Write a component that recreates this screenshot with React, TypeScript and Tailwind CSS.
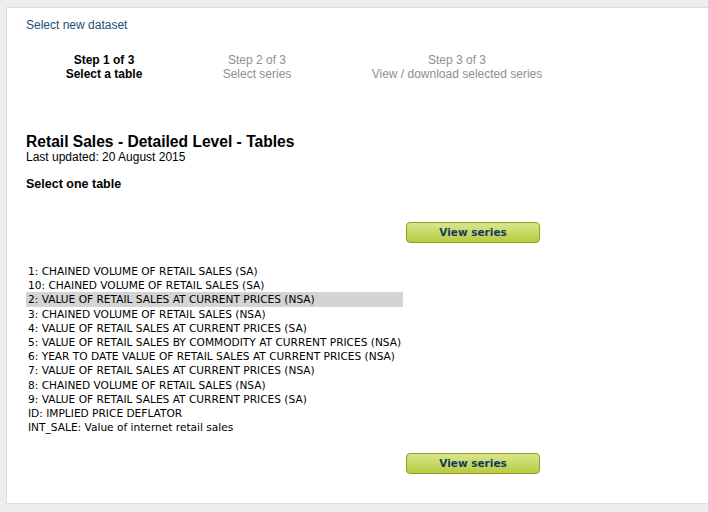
import React from "react";

const tables = [
  "1: CHAINED VOLUME OF RETAIL SALES (SA)",
  "10: CHAINED VOLUME OF RETAIL SALES (SA)",
  "2: VALUE OF RETAIL SALES AT CURRENT PRICES (NSA)",
  "3: CHAINED VOLUME OF RETAIL SALES (NSA)",
  "4: VALUE OF RETAIL SALES AT CURRENT PRICES (SA)",
  "5: VALUE OF RETAIL SALES BY COMMODITY AT CURRENT PRICES (NSA)",
  "6: YEAR TO DATE VALUE OF RETAIL SALES AT CURRENT PRICES (NSA)",
  "7: VALUE OF RETAIL SALES AT CURRENT PRICES (NSA)",
  "8: CHAINED VOLUME OF RETAIL SALES (NSA)",
  "9: VALUE OF RETAIL SALES AT CURRENT PRICES (SA)",
  "ID: IMPLIED PRICE DEFLATOR",
  "INT_SALE: Value of internet retail sales",
];

function ViewButton() {
  return (
    <div className="flex pl-[380px]">
      <button className="w-[134px] h-[21px] rounded-[4px] border border-[#8fa01e] bg-gradient-to-b from-[#d9e68a] to-[#b7cb3c] text-[#123a5e] text-[10.5px] font-bold font-['DejaVu_Sans',sans-serif]">
        View series
      </button>
    </div>
  );
}

function Step({ num, label, active, w }: { num: string; label: string; active?: boolean; w: string }) {
  return (
    <div className={`${w} flex flex-col items-center text-[12px] leading-[14px] ${active ? "font-bold text-black" : "text-[#8f8f8f]"}`}>
      <span>{num}</span>
      <span>{label}</span>
    </div>
  );
}

export default function App() {
  return (
    <div className="w-[708px] h-[512px] bg-[#eeeeee] pt-[7px] pl-[6px] overflow-hidden font-['Liberation_Sans',Arial,sans-serif]">
      <div className="w-[720px] h-[497px] bg-white border border-[#dcdcdc] pl-[19px] pt-[10px]">
        <div className="text-[12px] leading-[14px] text-[#1b4f78]">Select new dataset</div>
        <div className="flex mt-[21px]">
          <Step num="Step 1 of 3" label="Select a table" active w="w-[156px]" />
          <Step num="Step 2 of 3" label="Select series" w="w-[150px]" />
          <Step num="Step 3 of 3" label="View / download selected series" w="w-[250px]" />
        </div>
        <div className="mt-[52px] text-[15.6px] leading-[17px] font-bold text-black">Retail Sales - Detailed Level - Tables</div>
        <div className="text-[12px] leading-[14px] text-black">Last updated: 20 August 2015</div>
        <div className="mt-[13px] text-[12.5px] leading-[14px] font-bold text-black">Select one table</div>
        <div className="mt-[31px]">
          <ViewButton />
        </div>
        <div className="mt-[21px] w-[377px] font-['DejaVu_Sans',sans-serif] text-[10.6px] text-black">
          {tables.map((t, i) => (
            <div key={t} className={`h-[14.2px] leading-[14.2px] pl-[2px] whitespace-nowrap ${i === 2 ? "bg-[#d4d4d4]" : ""}`}>
              {t}
            </div>
          ))}
        </div>
        <div className="mt-[19px]">
          <ViewButton />
        </div>
      </div>
    </div>
  );
}
